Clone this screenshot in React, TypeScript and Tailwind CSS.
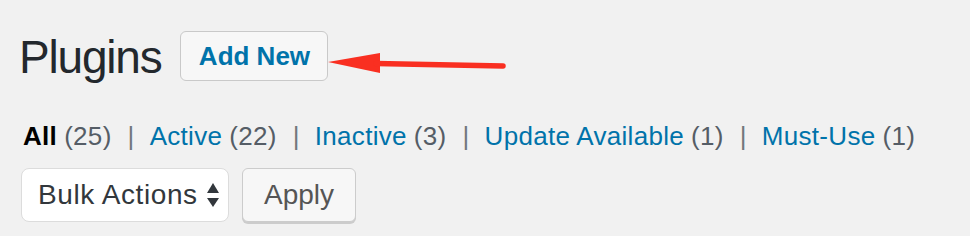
import React from "react";

const filters = [
  { label: "All", count: 25, current: true },
  { label: "Active", count: 22 },
  { label: "Inactive", count: 3 },
  { label: "Update Available", count: 1 },
  { label: "Must-Use", count: 1 },
];

export default function App() {
  return (
    <div className="relative w-[970px] h-[236px] overflow-hidden bg-[#f1f1f1] pl-[21px] font-['Liberation_Sans',Arial,sans-serif]">
      <div className="flex items-start pt-[31px]">
        <h1 className="-ml-[2px] mt-[1px] text-[46px] leading-[50px] tracking-[-1.2px] font-normal text-[#23282d]">
          Plugins
        </h1>
        <div className="ml-[19px] flex h-[50px] w-[148px] items-center justify-center rounded-[6px] border border-[#c9c9c9] bg-[#f7f7f7] text-[26px] font-bold text-[#0073aa]">
          Add New
        </div>
      </div>

      <div className="ml-[2px] mt-[36px] flex text-[26px] leading-[36px] tracking-[0.3px]">
        {filters.map((f, i) => (
          <span key={f.label} className="flex">
            <span className={f.current ? "font-bold text-black" : "text-[#0073aa]"}>{f.label}</span>
            <span className="ml-[7px] text-[#555d66]">({f.count})</span>
            {i < filters.length - 1 && <span className="ml-[16px] mr-[15px] text-[#72777c]">|</span>}
          </span>
        ))}
      </div>

      <div className="mt-[14px] flex items-start">
        <div className="flex h-[54px] w-[208px] items-center rounded-[8px] border border-[#dcdcdc] bg-white pl-[16px] text-[28px] tracking-[0.6px] text-[#32373c]">
          <span>Bulk Actions</span>
          <svg className="ml-auto mr-[9px]" width="12" height="24" viewBox="0 0 12 24">
            <polygon points="0,10 6,0 12,10" fill="#32373c" />
            <polygon points="0,15 12,15 6,24" fill="#32373c" />
          </svg>
        </div>
        <div className="ml-[13px] flex h-[54px] w-[114px] items-center justify-center rounded-[6px] border border-[#cccccc] bg-[#f7f7f7] text-[28px] text-[#555555] shadow-[0_2px_0_#cccccc]">
          Apply
        </div>
      </div>

      <svg className="absolute left-[326px] top-[50px]" width="182" height="26" viewBox="0 0 182 26">
        <polygon points="2,12 54,3 54,23" fill="#f92f21" />
        <line x1="50" y1="13.5" x2="177" y2="16" stroke="#f92f21" strokeWidth="5.5" strokeLinecap="round" />
      </svg>
    </div>
  );
}
